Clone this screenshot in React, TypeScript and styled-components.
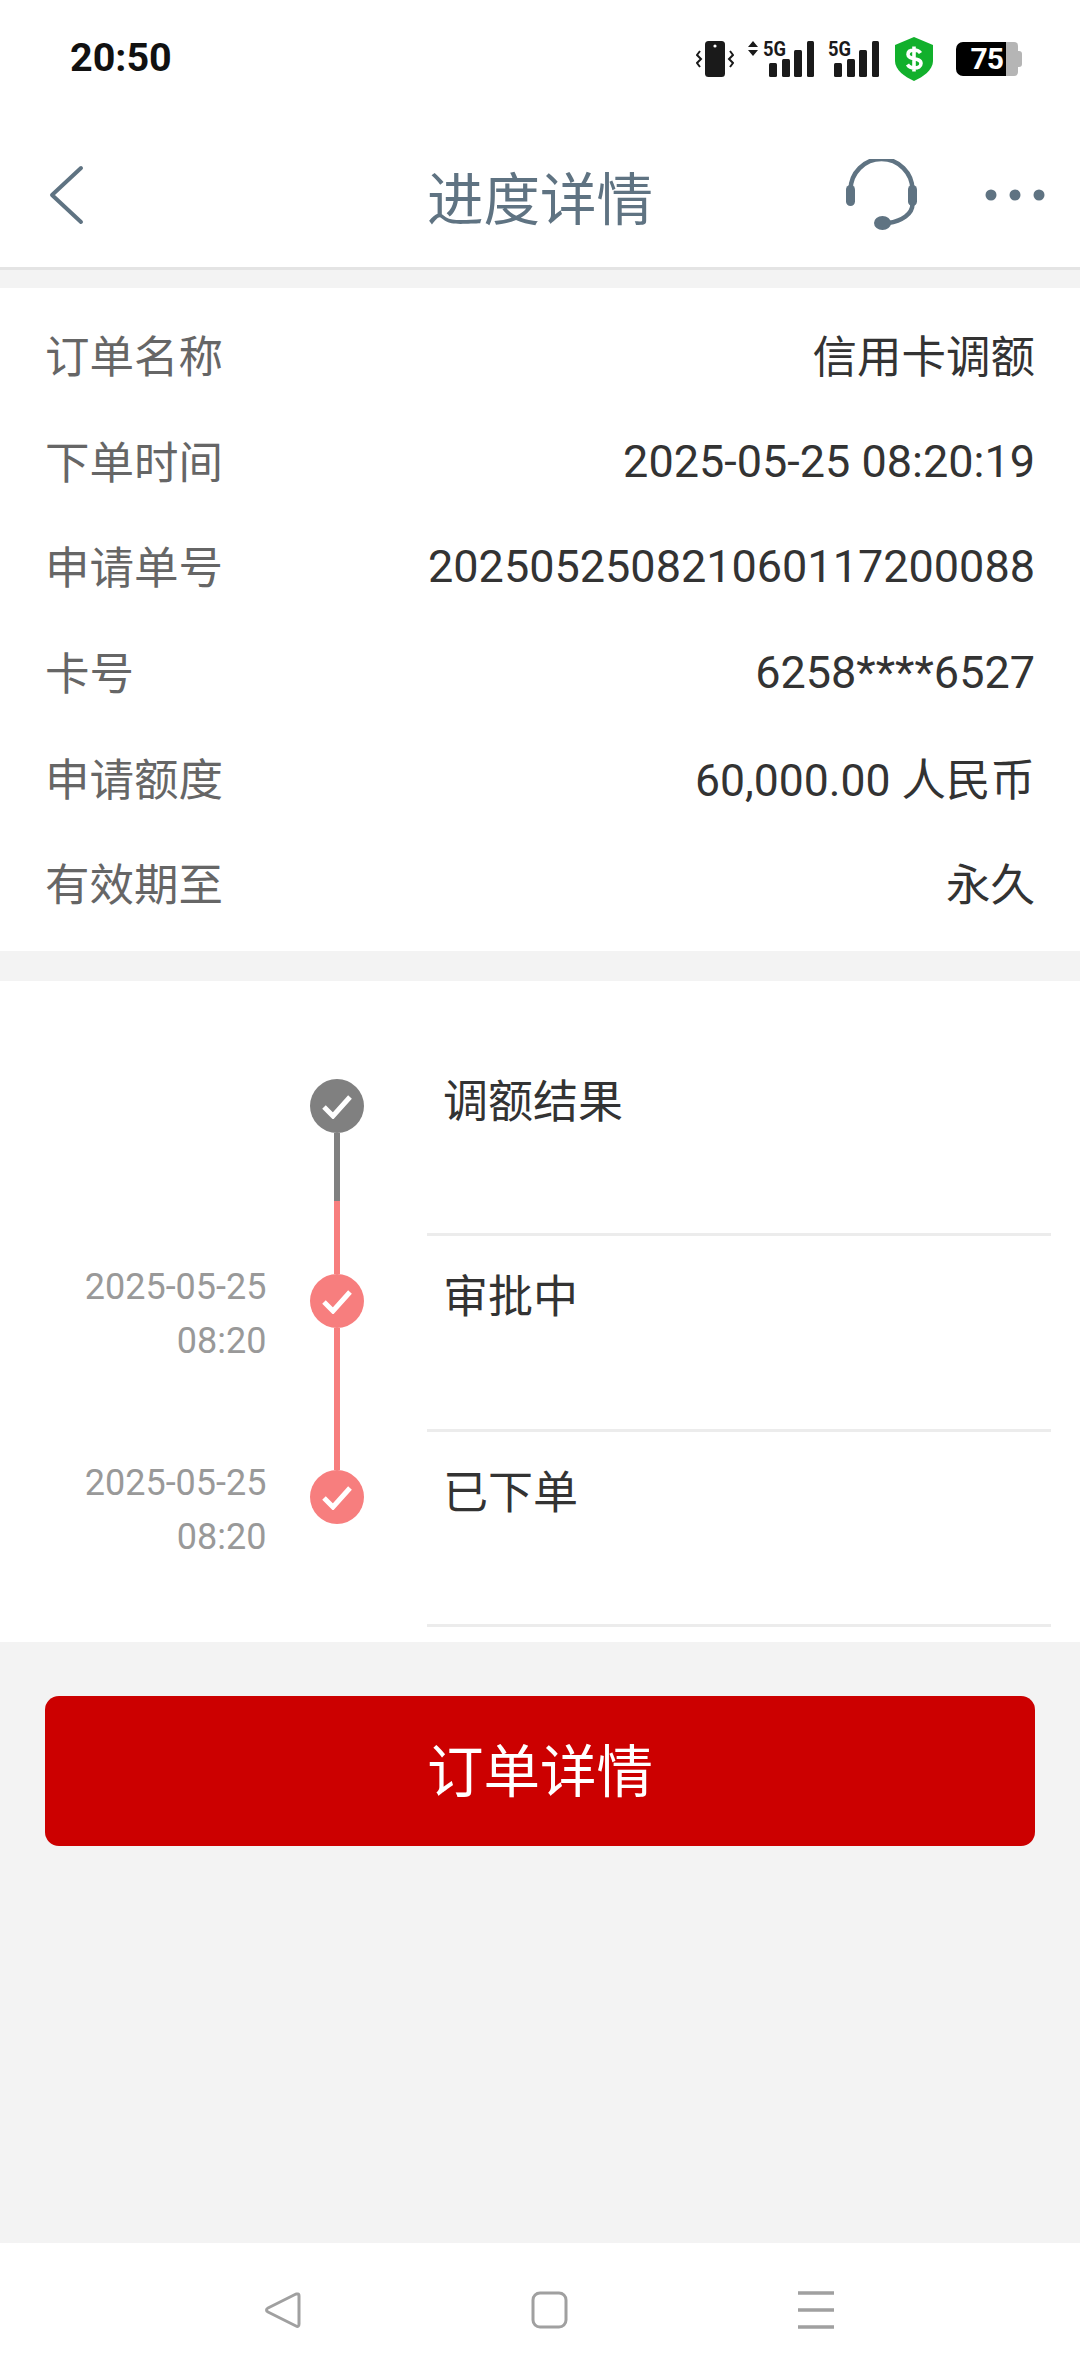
import React from 'react'
import styled, { createGlobalStyle } from 'styled-components'

const CJK = `Roboto, "Noto Sans CJK SC", sans-serif`
const GRAY = '#808080'
const RED = '#f77e7e'
const NAV_BLUE = '#5f7382'

const GlobalStyle = createGlobalStyle`
  html, body {
    margin: 0;
    padding: 0;
    background: #f3f3f3;
  }
  * {
    box-sizing: border-box;
  }
`

const Page = styled.div`
  width: 1080px;
  height: 2376px;
  display: flex;
  flex-direction: column;
  background: #f3f3f3;
  font-family: ${CJK};
  overflow: hidden;
`

const StatusBar = styled.div`
  height: 130px;
  background: #fff;
  display: flex;
  align-items: flex-start;
  justify-content: space-between;
  padding: 37px 58px 0 70px;
`

const Clock = styled.div`
  font-size: 39.5px;
  line-height: 42px;
  font-weight: 700;
  color: #111;
`

const StatusIcons = styled.div`
  display: flex;
  align-items: center;
  height: 44px;
`

const Battery = styled.div`
  width: 66px;
  height: 34px;
  margin-left: 23px;
  display: flex;
  align-items: stretch;
`

const BatteryFill = styled.div`
  width: 50px;
  padding-right: 3px;
  background: #000;
  border-radius: 7px 0 0 7px;
  color: #fff;
  font-size: 30px;
  line-height: 34px;
  font-weight: 700;
  text-align: right;
  letter-spacing: -1px;
`

const BatteryRest = styled.div`
  width: 12px;
  background: #b5b5b5;
  border-radius: 0 4px 4px 0;
`

const BatteryTip = styled.div`
  width: 4px;
  height: 16px;
  margin-top: 9px;
  background: #b5b5b5;
  border-radius: 0 3px 3px 0;
`

const NavBar = styled.header`
  height: 140px;
  background: #fff;
  border-bottom: 3px solid #e4e4e4;
  display: grid;
  grid-template-columns: 1fr auto 1fr;
  align-items: center;
  padding: 0 35px;
`

const NavLeft = styled.div`
  display: flex;
  align-items: center;
  padding: 0 0 8px 13px;
`

const Title = styled.h1`
  margin: 4px 0 0;
  font-size: 56.5px;
  line-height: 70px;
  font-weight: 400;
  color: ${NAV_BLUE};
`

const NavRight = styled.div`
  display: flex;
  align-items: center;
  justify-content: flex-end;
  gap: 68px;
  padding-bottom: 8px;
`

const InfoCard = styled.section`
  margin-top: 18px;
  padding: 12.5px 45px 16.5px;
  background: #fff;
`

const InfoRow = styled.div`
  height: 105.7px;
  display: flex;
  align-items: center;
  justify-content: space-between;
  font-size: 44.5px;
`

const InfoLabel = styled.span`
  color: #666;
`

const InfoValue = styled.span<{ $numeric?: boolean }>`
  color: #333;
  ${({ $numeric }) => $numeric && 'font-size: 45px; margin-top: 4px;'}
`

const Timeline = styled.section`
  margin-top: 30px;
  padding: 60px 29px 15px 0;
  background: #fff;
`

const Step = styled.div`
  height: 195.3px;
  display: grid;
  grid-template-columns: 266.5px 43.5px 54px 63px 1fr;
`

const StepTime = styled.div`
  padding-top: 24px;
  font-size: 36px;
  line-height: 54px;
  color: #999;
  text-align: right;
`

const Axis = styled.div`
  grid-column: 3;
  display: flex;
  flex-direction: column;
  align-items: center;
`

const Segment = styled.div<{ $top?: boolean; $tone: 'none' | 'red' | 'split' }>`
  width: 6px;
  ${({ $top }) => ($top ? 'height: 38px;' : 'flex: 1;')}
  background: ${({ $tone }) =>
    $tone === 'red'
      ? RED
      : $tone === 'split'
        ? `linear-gradient(${GRAY} 0 68px, ${RED} 68px)`
        : 'transparent'};
`

const Dot = styled.div<{ $done: boolean }>`
  width: 54px;
  height: 54px;
  flex: none;
  border-radius: 50%;
  background: ${({ $done }) => ($done ? RED : GRAY)};
  display: flex;
  align-items: center;
  justify-content: center;
`

const StepBody = styled.div`
  grid-column: 5;
  padding: 32px 0 0 16px;
  font-size: 45px;
  line-height: 60px;
  color: #333;
  border-bottom: 3px solid #ececec;
`

const OrderButton = styled.button`
  display: block;
  margin: 54px 45px 0;
  padding: 0 0 8px;
  height: 150px;
  border: 0;
  border-radius: 14px;
  background: #cc0000;
  color: #fff;
  font-family: inherit;
  font-size: 56.5px;
`

const Spacer = styled.div`
  flex: 1;
`

const SystemBar = styled.nav`
  height: 133px;
  background: #fff;
  display: flex;
  align-items: flex-start;
  padding: 48px 0 0 265px;
  gap: 230px;
`

const infoRows = [
  { label: '订单名称', value: '信用卡调额' },
  { label: '下单时间', value: '2025-05-25 08:20:19', numeric: true },
  { label: '申请单号', value: '202505250821060117200088', numeric: true },
  { label: '卡号', value: '6258****6527', numeric: true },
  { label: '申请额度', value: '60,000.00 人民币' },
  { label: '有效期至', value: '永久' },
]

const steps = [
  { title: '调额结果', date: '', time: '', done: false },
  { title: '审批中', date: '2025-05-25', time: '08:20', done: true },
  { title: '已下单', date: '2025-05-25', time: '08:20', done: true },
]

const PhoneVibrate = () => (
  <svg width="38" height="38" viewBox="0 0 38 38">
    <rect x="9" y="1" width="20" height="36" rx="3.5" fill="#1a1a1a" />
    <circle cx="19" cy="6" r="1.6" fill="#fff" />
    <path
      d="M4 11 L1 15 L5 19 L1 23 L4 27 M34 11 L37 15 L33 19 L37 23 L34 27"
      fill="none"
      stroke="#1a1a1a"
      strokeWidth="2"
    />
  </svg>
)

const Signal = ({ arrows }: { arrows?: boolean }) => (
  <svg
    width={arrows ? 66 : 51}
    height="44"
    viewBox={arrows ? '0 -3 66 44' : '15 -3 51 44'}
    style={{ marginLeft: 14 }}
  >
    {arrows && <path d="M5 1 L10 7 L0 7 Z M5 16 L10 10 L0 10 Z" fill="#1a1a1a" />}
    <text x="15" y="16" fontFamily="Roboto, sans-serif" fontWeight="700" fontSize="20" fill="#1a1a1a" textLength="23" lengthAdjust="spacingAndGlyphs">
      5G
    </text>
    <rect x="21" y="23" width="8" height="14" rx="1.5" fill="#1a1a1a" />
    <rect x="34" y="19" width="8" height="18" rx="1.5" fill="#1a1a1a" />
    <rect x="46" y="10" width="8" height="27" rx="1.5" fill="#1a1a1a" />
    <rect x="59" y="1" width="7" height="36" rx="1.5" fill="#1a1a1a" />
  </svg>
)

const Shield = () => (
  <svg width="38" height="44" viewBox="0 0 38 44" style={{ marginLeft: 16 }}>
    <path d="M19 0 L38 8 V24 C38 33 28 40 19 44 C10 40 0 33 0 24 V8 Z" fill="#12b02c" />
    <path
      d="M25.5 16 C24 13.5 21.5 13 19 13 C15.5 13 13 14.5 13 17.5 C13 23.5 26 20 26 26.5 C26 29.5 23 31 19.5 31 C16.5 31 14 30 12.5 27.5 M19 9.5 V34.5"
      fill="none"
      stroke="#fff"
      strokeWidth="3.6"
    />
  </svg>
)

const BackIcon = () => (
  <svg width="36" height="60" viewBox="0 0 36 60">
    <path d="M33 3 L4 30 L33 57" fill="none" stroke={NAV_BLUE} strokeWidth="4" strokeLinecap="round" strokeLinejoin="round" />
  </svg>
)

const HeadsetIcon = () => (
  <svg width="71" height="72" viewBox="0 0 71 72">
    <path d="M4.5 31 A31 31 0 0 1 66.5 31 V45 C66.5 55 56 62 42 64" fill="none" stroke={NAV_BLUE} strokeWidth="4.5" />
    <rect x="0" y="26" width="9" height="21" rx="4.5" fill={NAV_BLUE} />
    <rect x="62" y="26" width="9" height="21" rx="4.5" fill={NAV_BLUE} />
    <ellipse cx="36.5" cy="64" rx="8.5" ry="7" fill={NAV_BLUE} />
  </svg>
)

const MoreIcon = () => (
  <svg width="60" height="14" viewBox="0 0 60 14">
    <circle cx="6" cy="7" r="5.5" fill={NAV_BLUE} />
    <circle cx="30" cy="7" r="5.5" fill={NAV_BLUE} />
    <circle cx="54" cy="7" r="5.5" fill={NAV_BLUE} />
  </svg>
)

const CheckIcon = () => (
  <svg width="30" height="26" viewBox="0 0 30 26">
    <path d="M2 14 L11 23 L28 4" fill="none" stroke="#fff" strokeWidth="5" />
  </svg>
)

const SystemBack = () => (
  <svg width="36" height="38" viewBox="0 0 36 38">
    <path d="M33 3 C34 3 34 4 34 5 V33 C34 35 33 36 31 35 L3 21 C1 20 1 18 3 17 L31 3 Z" fill="none" stroke="#a0a0a0" strokeWidth="3" strokeLinejoin="round" />
  </svg>
)

const SystemHome = () => (
  <svg width="37" height="38" viewBox="0 0 37 38">
    <rect x="2" y="2" width="33" height="34" rx="7" fill="none" stroke="#a0a0a0" strokeWidth="3" />
  </svg>
)

const SystemMenu = () => (
  <svg width="36" height="38" viewBox="0 0 36 38">
    <path d="M0 2 H36 M0 19 H36 M0 36 H36" fill="none" stroke="#a0a0a0" strokeWidth="3.5" />
  </svg>
)

const App = () => {
  return (
    <Page>
      <GlobalStyle />
      <StatusBar>
        <Clock>20:50</Clock>
        <StatusIcons>
          <PhoneVibrate />
          <Signal arrows />
          <Signal />
          <Shield />
          <Battery>
            <BatteryFill>75</BatteryFill>
            <BatteryRest />
            <BatteryTip />
          </Battery>
        </StatusIcons>
      </StatusBar>
      <NavBar>
        <NavLeft>
          <BackIcon />
        </NavLeft>
        <Title>进度详情</Title>
        <NavRight>
          <HeadsetIcon />
          <MoreIcon />
        </NavRight>
      </NavBar>
      <InfoCard>
        {infoRows.map(({ label, value, numeric }) => (
          <InfoRow key={label}>
            <InfoLabel>{label}</InfoLabel>
            <InfoValue $numeric={numeric}>{value}</InfoValue>
          </InfoRow>
        ))}
      </InfoCard>
      <Timeline>
        {steps.map((step, i) => (
          <Step key={step.title}>
            <StepTime>
              {step.date}
              <br />
              {step.time}
            </StepTime>
            <Axis>
              <Segment $top $tone={i === 0 ? 'none' : 'red'} />
              <Dot $done={step.done}>
                <CheckIcon />
              </Dot>
              <Segment $tone={i === 0 ? 'split' : i === 1 ? 'red' : 'none'} />
            </Axis>
            <StepBody>{step.title}</StepBody>
          </Step>
        ))}
      </Timeline>
      <OrderButton>订单详情</OrderButton>
      <Spacer />
      <SystemBar>
        <SystemBack />
        <SystemHome />
        <SystemMenu />
      </SystemBar>
    </Page>
  )
}

export default App
